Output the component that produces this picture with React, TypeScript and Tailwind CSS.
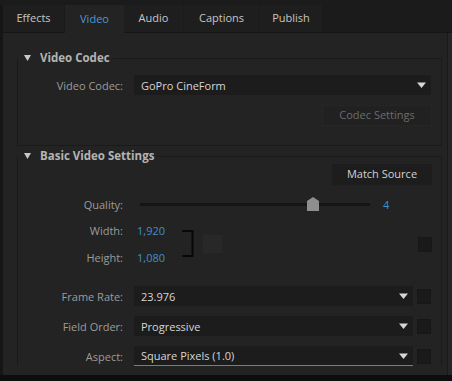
import React from "react";

const FONT = { fontFamily: '"Open Sans", "Noto Sans", Arial, sans-serif' };

function Tri({ className = "" }: { className?: string }) {
  return (
    <svg width="9" height="6" viewBox="0 0 9 6" className={className}>
      <path d="M0 0.5 H9 L4.5 6 Z" fill="#d6d6d6" />
    </svg>
  );
}

function Dropdown({ value, width, underline = false }: { value: string; width: string; underline?: boolean }) {
  return (
    <div
      className={`${width} h-[20px] bg-[#1c1c1c] flex items-center justify-between pl-[7px] pr-[5px] text-[#d6d6d6] text-[11px] ${
        underline ? "border-b border-[#3e8fc6]" : ""
      }`}
    >
      <span className="leading-none">{value}</span>
      <Tri />
    </div>
  );
}

function Label({ children }: { children: React.ReactNode }) {
  return <div className="w-[105px] shrink-0 text-right text-[11px] text-[#9c9c9c] leading-none">{children}</div>;
}

function Check() {
  return <div className="w-[14px] h-[15px] bg-[#1a1a1a] border border-[#171717] shrink-0" />;
}

function Legend({ title }: { title: string }) {
  return (
    <legend className="h-[16px] flex items-center pl-[6px] pr-[3px]">
      <svg width="7" height="6" viewBox="0 0 7 6" className="mr-[9px]">
        <path d="M0 0 H7 L3.5 6 Z" fill="#c8c8c8" />
      </svg>
      <span className="text-[11.5px] font-bold text-[#b4b4b4] leading-none">{title}</span>
    </legend>
  );
}

export default function App() {
  const tabs = [
    { name: "Effects", w: "w-[62px]" },
    { name: "Video", w: "w-[59px]", active: true },
    { name: "Audio", w: "w-[60px]" },
    { name: "Captions", w: "w-[76px]" },
    { name: "Publish", w: "w-[63px]" },
  ];
  return (
    <div className="w-[452px] h-[381px] bg-[#0d0d0d] flex flex-col overflow-hidden" style={FONT}>
      <div className="h-[5px] bg-[#1b1b1b] shrink-0" />
      <div className="h-[28px] flex bg-[#1b1b1b] shrink-0">
        <div className="w-[3px] bg-[#161616]" />
        {tabs.map((t) =>
          t.active ? (
            <div key={t.name} className={`${t.w} bg-[#232323] flex items-center justify-center text-[11px] text-[#4a9ad2]`}>
              {t.name}
            </div>
          ) : (
            <div
              key={t.name}
              className={`${t.w} bg-[#1e1e1e] border-b border-[#161616] border-r border-r-[#1a1a1a] flex items-center justify-center text-[11px] text-[#c6c6c6]`}
            >
              {t.name}
            </div>
          )
        )}
        <div className="flex-1 border-b border-[#161616]" />
      </div>
      <div className="flex-1 flex min-h-0">
        <div className="w-[3px] bg-[#161616]" />
        <div className="w-[445px] bg-[#232323] border-r border-[#1a1a1a] pl-[14px] pr-[6px] flex flex-col">
          {/* Video Codec */}
          <fieldset className="mt-[17px] w-[425px] border border-[#1a1a1a] pt-[9px] pb-[19px]">
            <Legend title="Video Codec" />
            <div className="flex items-center h-[20px]">
              <Label>Video Codec:</Label>
              <div className="ml-[11px]">
                <Dropdown value="GoPro CineForm" width="w-[297px]" />
              </div>
            </div>
            <div className="flex justify-end mt-[10px] pr-[9px]">
              <div className="w-[110px] h-[21px] bg-[#212121] border border-dotted border-[#2a2a2a] flex items-center justify-center text-[11px] text-[#6c6c6c]">
                Codec Settings
              </div>
            </div>
          </fieldset>

          {/* Basic Video Settings */}
          <fieldset className="mt-[2px] w-[425px] border border-[#1a1a1a] border-b-0 pt-0">
            <Legend title="Basic Video Settings" />
            <div className="flex justify-end pr-[9px]">
              <div className="w-[100px] h-[21px] bg-[#1d1d1d] flex items-center justify-center text-[11px] text-[#d2d2d2]">
                Match Source
              </div>
            </div>
            <div className="flex items-center h-[20px] mt-[9px]">
              <Label>Quality:</Label>
              <div className="ml-[17px] relative w-[230px] h-[3px] bg-[#151515]">
                <svg width="12" height="14" viewBox="0 0 12 14" className="absolute left-[167px] top-[-6px]">
                  <path d="M6 0 L12 4 V14 H0 V4 Z" fill="#8e8e8e" />
                </svg>
              </div>
              <span className="ml-[13px] text-[11px] text-[#3f8fc8] leading-none">4</span>
            </div>
            <div className="flex items-center mt-[6px]">
              <div className="flex flex-col gap-[7px]">
                <div className="flex items-center h-[20px]">
                  <Label>Width:</Label>
                  <span className="ml-[14px] text-[11px] text-[#3f8fc8] leading-none">1,920</span>
                </div>
                <div className="flex items-center h-[20px]">
                  <Label>Height:</Label>
                  <span className="ml-[14px] text-[11px] text-[#3f8fc8] leading-none">1,080</span>
                </div>
              </div>
              <svg width="12" height="27" viewBox="0 0 12 27" className="ml-[17px]">
                <path d="M0 1 H10.5 V26 H0" fill="none" stroke="#080808" strokeWidth="2" />
              </svg>
              <div className="ml-[9px] w-[19px] h-[18px] bg-[#282828]" />
              <div className="flex-1" />
              <div className="mr-[9px] mt-[2px]">
                <Check />
              </div>
            </div>
            <div className="flex flex-col gap-[10px] mt-[19px]">
              <div className="flex items-center h-[20px]">
                <Label>Frame Rate:</Label>
                <div className="ml-[11px]">
                  <Dropdown value="23.976" width="w-[279px]" />
                </div>
                <div className="ml-[4px]">
                  <Check />
                </div>
              </div>
              <div className="flex items-center h-[20px]">
                <Label>Field Order:</Label>
                <div className="ml-[11px]">
                  <Dropdown value="Progressive" width="w-[279px]" />
                </div>
                <div className="ml-[4px]">
                  <Check />
                </div>
              </div>
              <div className="flex items-center h-[20px]">
                <Label>Aspect:</Label>
                <div className="ml-[11px]">
                  <Dropdown value="Square Pixels (1.0)" width="w-[279px]" underline />
                </div>
                <div className="ml-[4px]">
                  <Check />
                </div>
              </div>
            </div>
          </fieldset>
        </div>
        <div className="flex-1 bg-[#262626]" />
      </div>
      <div className="h-[6px] bg-[#0d0d0d] shrink-0" />
    </div>
  );
}
